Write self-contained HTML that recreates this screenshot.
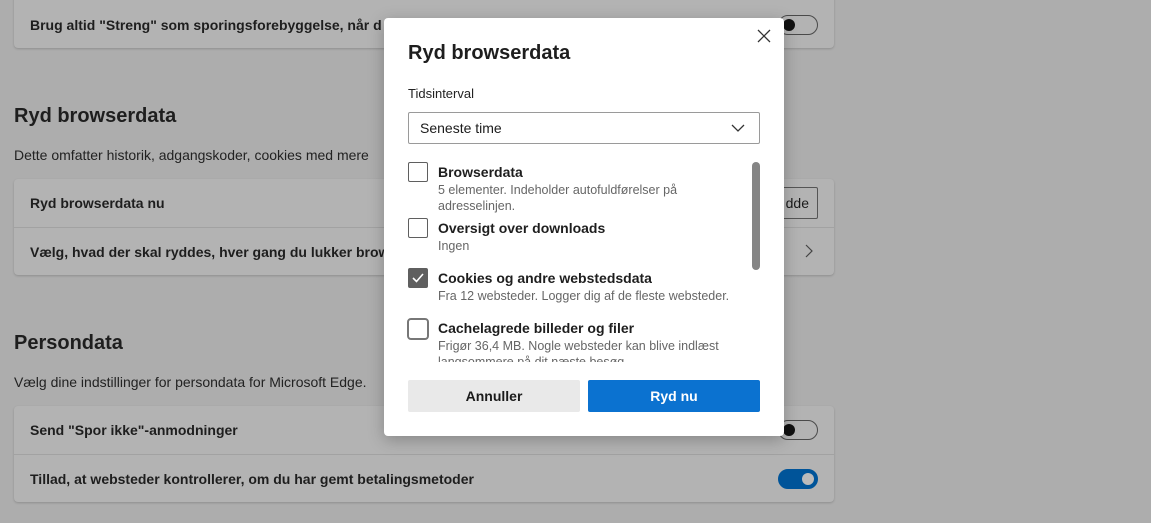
<!DOCTYPE html>
<html><head><style>
*{box-sizing:border-box;margin:0;padding:0}
body{width:1151px;height:523px;overflow:hidden;background:#adadad;font-family:"Liberation Sans",sans-serif;color:#1b1b1b;position:relative}
.card{position:absolute;left:14px;width:820px;background:#b3b3b3;border-radius:4px;box-shadow:0 1px 2px rgba(0,0,0,.18)}
.row{position:absolute;left:16px;font-size:14px;font-weight:bold;color:#1e1e1e}
.div{position:absolute;left:0;right:0;height:1px;background:#a2a2a2}
h2{position:absolute;left:14px;font-size:20px;font-weight:bold;color:#1e1e1e}
.desc{position:absolute;left:14px;font-size:14px;color:#222}
.tog{position:absolute;width:40px;height:20px;border:1px solid #4a4a4a;border-radius:10px}
.tog i{position:absolute;width:12px;height:12px;border-radius:50%;background:#111;top:3px;left:4px}
.dlg{position:absolute;left:384px;top:18px;width:400px;height:418px;background:#fff;border-radius:4px;box-shadow:0 4px 16px rgba(0,0,0,.25)}
.cb{position:absolute;left:24px;width:20px;height:20px;border:1px solid #5f5f5f;border-radius:2px}
.it{position:absolute;left:54px;font-size:14px;font-weight:bold;color:#1e1e1e}
.sub{position:absolute;left:54px;font-size:12.5px;color:#666;line-height:16px;width:310px}
</style></head><body>
<div class="card" style="top:-10px;height:58px"><div class="row" style="top:27px">Brug altid "Streng" som sporingsforebyggelse, når d</div><div class="tog" style="left:764px;top:25px"><i></i></div></div>
<h2 style="top:105px">Ryd browserdata</h2>
<div class="desc" style="top:147px">Dette omfatter historik, adgangskoder, cookies med mere</div>
<div class="card" style="top:179px;height:96px"><div class="row" style="top:16px">Ryd browserdata nu</div><div class="div" style="top:48px"></div><div class="row" style="top:65px">Vælg, hvad der skal ryddes, hver gang du lukker brow</div>
<div style="position:absolute;left:760px;top:8px;width:44px;height:32px;border:1px solid #555;border-radius:2px;font-size:14px;line-height:30px;text-align:right;padding-right:8px">dde</div>
<svg style="position:absolute;left:790px;top:64px" width="10" height="16"><path d="M2 2l6 6-6 6" fill="none" stroke="#444" stroke-width="1.2"/></svg></div>
<h2 style="top:332px">Persondata</h2>
<div class="desc" style="top:374px">Vælg dine indstillinger for persondata for Microsoft Edge.</div>
<div class="card" style="top:406px;height:96px"><div class="row" style="top:16px">Send "Spor ikke"-anmodninger</div><div class="tog" style="left:764px;top:14px"><i></i></div><div class="div" style="top:48px"></div><div class="row" style="top:65px">Tillad, at websteder kontrollerer, om du har gemt betalingsmetoder</div>
<div class="tog" style="left:764px;top:63px;background:#005499;border-color:#005499"><i style="background:#bbb;left:23px"></i></div></div>
<div class="dlg">
<div style="position:absolute;left:24px;top:24px;font-size:20px;font-weight:bold;color:#1e1e1e">Ryd browserdata</div>
<svg style="position:absolute;left:373px;top:11px" width="14" height="14"><path d="M1 1l12 12M13 1L1 13" stroke="#333" stroke-width="1.3"/></svg>
<div style="position:absolute;left:24px;top:68px;font-size:13px;color:#222">Tidsinterval</div>
<div style="position:absolute;left:24px;top:94px;width:352px;height:32px;border:1px solid #9a9a9a;border-radius:2px;font-size:14px;line-height:30px;padding-left:11px">Seneste time
<svg style="position:absolute;right:14px;top:11px" width="14" height="9"><path d="M1 1l6 6 6-6" fill="none" stroke="#333" stroke-width="1.3"/></svg></div>
<div style="position:absolute;left:0;top:140px;width:400px;height:204px;overflow:hidden">
<div class="cb" style="top:4px"></div><div class="it" style="top:6px">Browserdata</div><div class="sub" style="top:24px">5 elementer. Indeholder autofuldførelser på adresselinjen.</div>
<div class="cb" style="top:60px"></div><div class="it" style="top:62px">Oversigt over downloads</div><div class="sub" style="top:80px">Ingen</div>
<div class="cb" style="top:110px;background:#5f5f5f;border-color:#5f5f5f"><svg width="18" height="18"><path d="M4 9l3.5 3.5L14 5" fill="none" stroke="#fff" stroke-width="1.6"/></svg></div><div class="it" style="top:112px">Cookies og andre webstedsdata</div><div class="sub" style="top:130px">Fra 12 websteder. Logger dig af de fleste websteder.</div>
<div class="cb" style="top:160px;width:22px;height:22px;left:23px;border:2px solid #777;border-radius:4px"></div><div class="it" style="top:162px">Cachelagrede billeder og filer</div><div class="sub" style="top:180px">Frigør 36,4 MB. Nogle websteder kan blive indlæst langsommere på dit næste besøg.</div>
</div>
<div style="position:absolute;left:368px;top:144px;width:8px;height:108px;border-radius:4px;background:#858585"></div>
<div style="position:absolute;left:24px;top:362px;width:172px;height:32px;background:#e9e9e9;border-radius:2px;font-size:14px;font-weight:bold;text-align:center;line-height:32px">Annuller</div>
<div style="position:absolute;left:204px;top:362px;width:172px;height:32px;background:#0b72d0;border-radius:2px;font-size:14px;font-weight:bold;color:#fff;text-align:center;line-height:32px">Ryd nu</div>
</div>
</body></html>
